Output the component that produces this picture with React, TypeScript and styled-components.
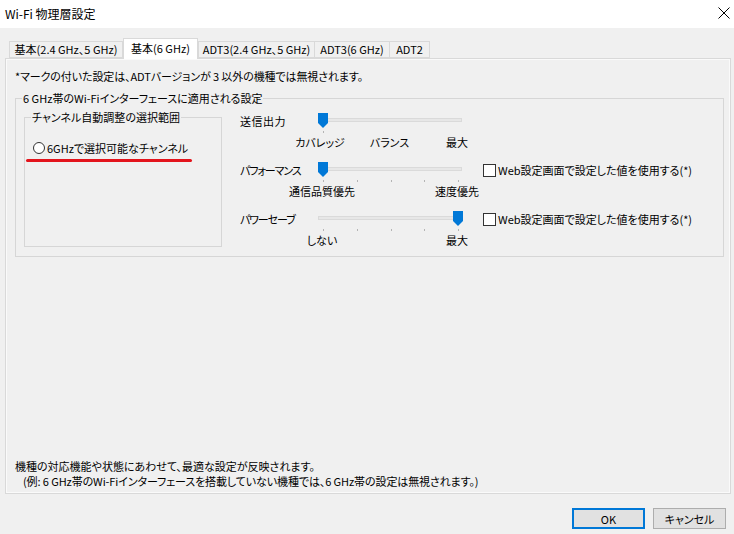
import React from "react";
import styled, { createGlobalStyle } from "styled-components";

const GlobalStyle = createGlobalStyle`
  html, body { margin: 0; padding: 0; }
  body {
    width: 734px;
    height: 534px;
    overflow: hidden;
    background: #f0f0f0;
    font-family: "Noto Sans CJK JP", "Noto Sans", sans-serif;
    font-feature-settings: "palt";
    font-size: 11px;
    color: #000;
  }
  #root { height: 100%; }
`;

const Window = styled.div`
  width: 734px;
  height: 534px;
  display: flex;
  flex-direction: column;
`;

const TitleBar = styled.div`
  height: 28px;
  flex: none;
  background: #fff;
  display: flex;
  align-items: center;
  justify-content: space-between;
  padding: 0 4px 2px 5px;
  box-sizing: border-box;
  font-size: 12px;
`;

const CloseButton = styled.div`
  width: 12px;
  height: 12px;
  display: flex;
`;

const Body = styled.div`
  flex: 1;
  display: flex;
  flex-direction: column;
  padding: 10px 3px 5px 5px;
  min-height: 0;
`;

const TabRow = styled.div`
  display: flex;
  align-items: flex-end;
  height: 20px;
  padding-left: 4px;
  position: relative;
  z-index: 2;
  flex: none;
`;

const Tab = styled.div<{ $active?: boolean; $w: number; $overlap?: boolean }>`
  box-sizing: border-box;
  width: ${(p) => p.$w}px;
  height: ${(p) => (p.$active ? 21 : 17)}px;
  margin: 0 0 ${(p) => (p.$active ? -1 : 0)}px ${(p) => (p.$overlap ? -1 : 0)}px;
  border: 1px solid #d9d9d9;
  border-bottom: ${(p) => (p.$active ? "none" : "1px solid #d9d9d9")};
  background: ${(p) => (p.$active ? "#fff" : "#f0f0f0")};
  position: relative;
  z-index: ${(p) => (p.$active ? 2 : 1)};
  white-space: nowrap;
  display: flex;
  align-items: center;
  justify-content: center;
  padding-bottom: ${(p) => (p.$active ? 1 : 0)}px;
  line-height: 15px;
`;

const Panel = styled.div`
  flex: 1;
  display: flex;
  flex-direction: column;
  border: 1px solid #d9d9d9;
  box-shadow: inset 0 0 0 1px #fafafa;
  padding: 10px 6px 4px 9px;
  min-height: 0;
`;

const Line = styled.div`
  line-height: 14px;
  white-space: nowrap;
  letter-spacing: -0.1px;
`;

const GroupBox = styled.fieldset<{ $width?: number }>`
  margin: 0;
  min-width: 0;
  border: 1px solid #d6d6d6;
  padding: 5px 8px 9px 8px;
  box-sizing: border-box;
  ${(p) => (p.$width ? `width: ${p.$width}px; flex: none;` : "")}
`;

const OuterGroup = styled(GroupBox)`
  margin-top: 8px;
`;

const InnerGroup = styled(GroupBox)`
  padding-top: 16px;
`;

const Legend = styled.legend`
  margin-left: -2px;
  padding: 0 1px;
  line-height: 14px;
  white-space: nowrap;
`;

const GroupContent = styled.div`
  display: flex;
  gap: 18px;
  align-items: stretch;
`;

const RadioRow = styled.label`
  display: flex;
  align-items: center;
  gap: 2px;
  height: 16px;
  white-space: nowrap;
`;

const RadioCircle = styled.span`
  width: 12px;
  height: 12px;
  box-sizing: border-box;
  border: 1px solid #333;
  border-radius: 50%;
  background: #fff;
  flex: none;
`;

const RedMark = styled.div`
  margin: 3px 0 0 -7px;
  width: 166px;
  height: 3px;
  border-radius: 2px;
  background: #e3141c;
`;

const SliderColumn = styled.div`
  display: flex;
  flex-direction: column;
  gap: 13px;
  margin-top: 3px;
`;

const SliderRow = styled.div`
  display: grid;
  grid-template-columns: 76px 150px auto;
  align-items: start;
`;

const RowLabel = styled.div<{ $tight?: boolean }>`
  line-height: 16px;
  white-space: nowrap;
  letter-spacing: ${(p) => (p.$tight ? "-1.1px" : "0.5px")};
`;

const SliderBox = styled.div`
  position: relative;
  width: 150px;
  height: 36px;
`;

const Track = styled.div`
  position: absolute;
  left: 2px;
  right: 4px;
  top: 5px;
  height: 2px;
  background: #e7e7e7;
  border: 1px solid #dadada;
`;

const Thumb = styled.svg`
  position: absolute;
  top: 0;
  width: 10px;
  height: 15px;
`;

const Tick = styled.div`
  position: absolute;
  top: 18px;
  width: 1px;
  height: 2px;
  background: #b4b4b4;
`;

const TickLabel = styled.div`
  position: absolute;
  top: 22px;
  line-height: 14px;
  white-space: nowrap;
  transform: translateX(-50%);
`;

const CheckRow = styled.label`
  margin-left: 17px;
  display: flex;
  align-items: center;
  gap: 2px;
  height: 16px;
  white-space: nowrap;
`;

const CheckBox = styled.span`
  width: 13px;
  height: 13px;
  box-sizing: border-box;
  border: 1px solid #333;
  background: #fff;
  flex: none;
`;

const Spacer = styled.div`
  flex: 1;
`;

const Notes = styled.div`
  line-height: 15px;
  white-space: nowrap;
`;

const NoteIndent = styled.div`
  padding-left: 8px;
  letter-spacing: -0.1px;
`;

const Footer = styled.div`
  display: flex;
  justify-content: flex-end;
  gap: 8px;
  margin-top: 14px;
  padding-right: 5px;
  flex: none;
`;

const Button = styled.button<{ $default?: boolean }>`
  width: 73px;
  height: 21px;
  margin: 0;
  padding: 0;
  font: inherit;
  color: #000;
  background: #e1e1e1;
  border: 1px solid ${(p) => (p.$default ? "#0078d7" : "#adadad")};
  box-shadow: ${(p) => (p.$default ? "inset 0 0 0 1px #0078d7" : "none")};
`;

const pos = (v: number) => 7 + 135 * v;

type SliderProps = {
  value: number;
  ticks: number[];
  labels: { at: number; text: string; dx?: number }[];
};

const Slider = ({ value, ticks, labels }: SliderProps) => (
  <SliderBox>
    <Track />
    {ticks.map((t) => (
      <Tick key={t} style={{ left: pos(t) }} />
    ))}
    <Thumb style={{ left: pos(value) - 5 }} viewBox="0 0 10 15">
      <path d="M0 0H10V10L5 15L0 10Z" fill="#0078d7" />
    </Thumb>
    {labels.map((l) => (
      <TickLabel key={l.text + l.at} style={{ left: pos(l.at) + (l.dx ?? -1) }}>
        {l.text}
      </TickLabel>
    ))}
  </SliderBox>
);

const WebCheck = () => (
  <CheckRow>
    <CheckBox />
    Web設定画面で設定した値を使用する(*)
  </CheckRow>
);

const tabs = [
  { label: "基本(2.4 GHz、5 GHz)", w: 114 },
  { label: "基本(6 GHz)", w: 75, active: true },
  { label: "ADT3(2.4 GHz、5 GHz)", w: 117 },
  { label: "ADT3(6 GHz)", w: 76, overlap: true },
  { label: "ADT2", w: 41, overlap: true },
];

export default function App() {
  return (
    <Window>
      <GlobalStyle />
      <TitleBar>
        <span>Wi-Fi 物理層設定</span>
        <CloseButton>
          <svg width="12" height="12" viewBox="0 0 12 12">
            <path d="M0.5 0.5L11.5 11.5M11.5 0.5L0.5 11.5" stroke="#000" strokeWidth="1" />
          </svg>
        </CloseButton>
      </TitleBar>
      <Body>
        <TabRow>
          {tabs.map((t) => (
            <Tab key={t.label} $w={t.w} $active={t.active} $overlap={t.overlap}>
              {t.label}
            </Tab>
          ))}
        </TabRow>
        <Panel>
          <Line>*マークの付いた設定は、ADTバージョンが 3 以外の機種では無視されます。</Line>
          <OuterGroup>
            <Legend>6 GHz帯のWi-Fiインターフェースに適用される設定</Legend>
            <GroupContent>
              <InnerGroup $width={198}>
                <Legend>チャンネル自動調整の選択範囲</Legend>
                <RadioRow>
                  <RadioCircle />
                  6GHzで選択可能なチャンネル
                </RadioRow>
                <RedMark />
              </InnerGroup>
              <SliderColumn>
                <SliderRow>
                  <RowLabel>送信出力</RowLabel>
                  <Slider
                    value={0}
                    ticks={[0]}
                    labels={[
                      { at: 0, text: "カバレッジ", dx: -3 },
                      { at: 0.5, text: "バランス", dx: -1 },
                      { at: 1, text: "最大", dx: -1 },
                    ]}
                  />
                </SliderRow>
                <SliderRow>
                  <RowLabel $tight>パフォーマンス</RowLabel>
                  <Slider
                    value={0}
                    ticks={[0, 0.25, 0.5, 0.75, 1]}
                    labels={[
                      { at: 0, text: "通信品質優先" },
                      { at: 1, text: "速度優先" },
                    ]}
                  />
                  <WebCheck />
                </SliderRow>
                <SliderRow>
                  <RowLabel $tight>パワーセーブ</RowLabel>
                  <Slider
                    value={1}
                    ticks={[0, 0.25, 0.5, 0.75, 1]}
                    labels={[
                      { at: 0, text: "しない" },
                      { at: 1, text: "最大" },
                    ]}
                  />
                  <WebCheck />
                </SliderRow>
              </SliderColumn>
            </GroupContent>
          </OuterGroup>
          <Spacer />
          <Notes>
            <div>機種の対応機能や状態にあわせて、最適な設定が反映されます。</div>
            <NoteIndent>
              (例: 6 GHz帯のWi-Fiインターフェースを搭載していない機種では、6 GHz帯の設定は無視されます。)
            </NoteIndent>
          </Notes>
        </Panel>
        <Footer>
          <Button $default>OK</Button>
          <Button>キャンセル</Button>
        </Footer>
      </Body>
    </Window>
  );
}
